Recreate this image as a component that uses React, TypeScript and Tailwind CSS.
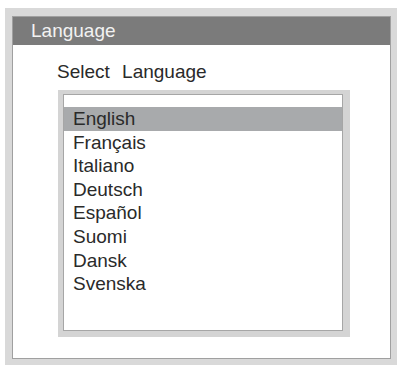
const languages = ["English", "Français", "Italiano", "Deutsch", "Español", "Suomi", "Dansk", "Svenska"];

export default function App() {
  return (
    <div className="w-[401px] h-[367px] bg-white pt-[8px] pl-[5px] font-['Liberation_Sans',Arial,sans-serif]">
      <div className="w-[392px] h-[357px] bg-[#d9d9d9] pl-[7px] pt-[8px] pr-[6px] pb-[6px]">
        <div className="h-full border border-[#a0a0a0] bg-white flex flex-col">
          <div className="h-[28px] bg-[#7b7b7b] pl-[18px] text-[19px] leading-[28px] text-[#f2f2f2]">Language</div>
          <div className="mt-[16px] ml-[44px] text-[19px] leading-[22px] text-[#2a2a2a] [word-spacing:7px]">Select Language</div>
          <div className="mt-[7px] ml-[45px] w-[292px] h-[247px] bg-[#d4d4d4] pl-[5px] pt-[4px] pr-[7px] pb-[6px]">
            <div className="h-full border border-[#a6a6a6] bg-white pt-[12px]">
              {languages.map((lang, i) => (
                <div
                  key={lang}
                  className={`h-[23.6px] pl-[9px] text-[19px] leading-[23px] text-[#2a2a2a] ${i === 0 ? "bg-[#a8aaac]" : ""}`}
                >
                  {lang}
                </div>
              ))}
            </div>
          </div>
        </div>
      </div>
    </div>
  );
}
